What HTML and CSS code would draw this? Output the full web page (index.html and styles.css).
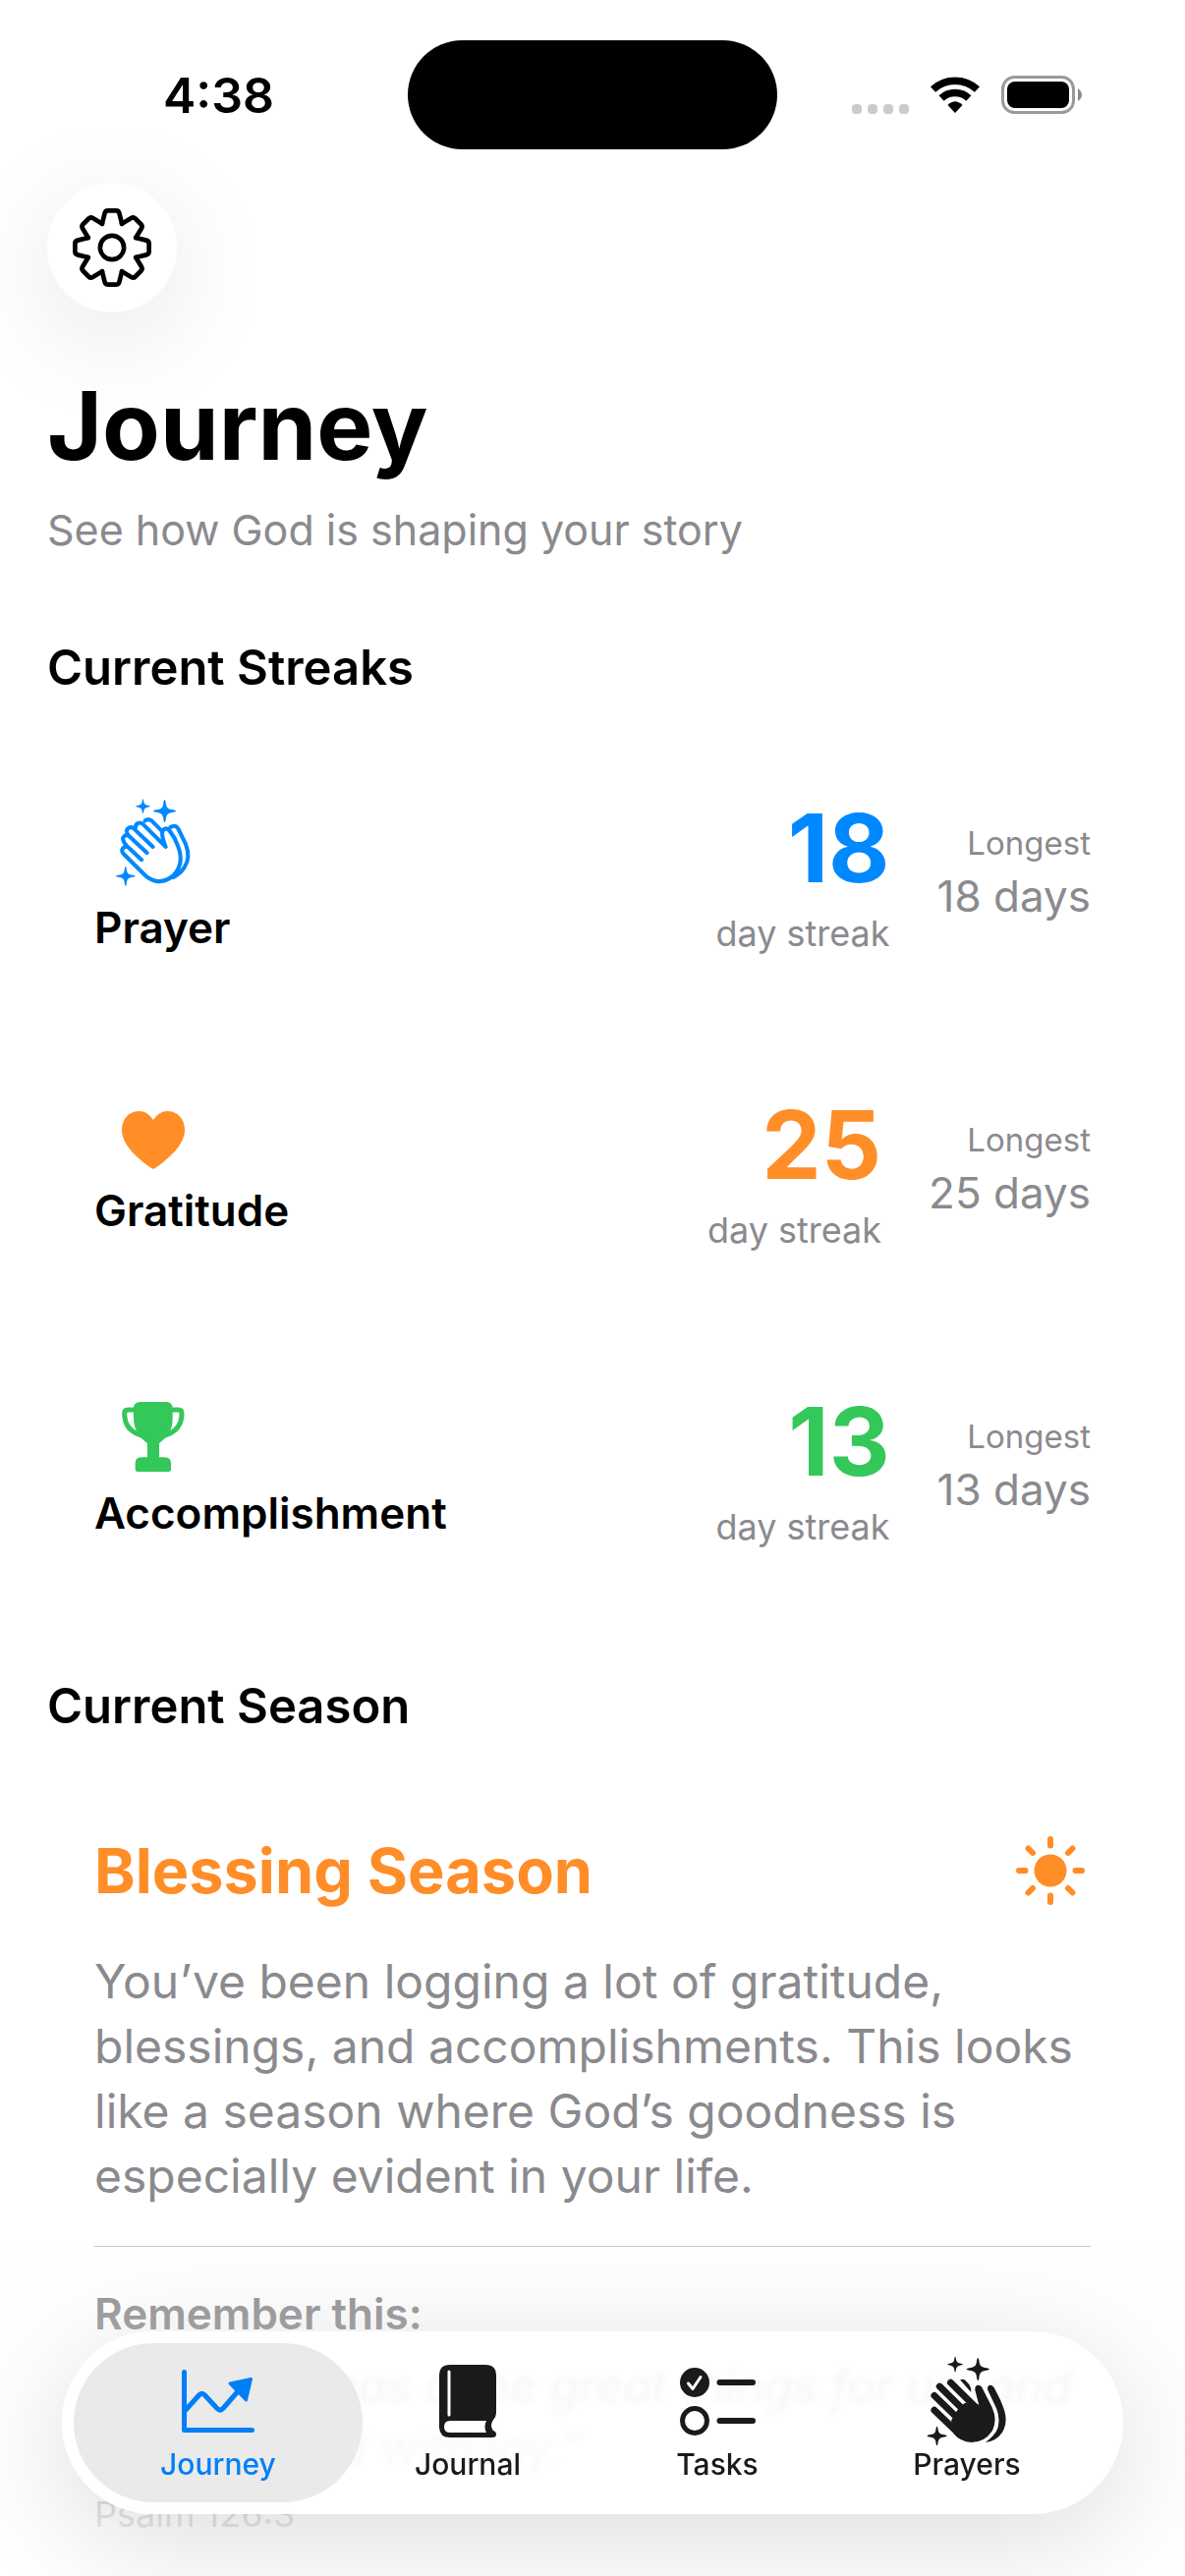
FILE: index.html
```html
<!DOCTYPE html>
<html lang="en">
<head>
    <meta charset="UTF-8">
    <meta name="viewport" content="width=device-width, initial-scale=1.0">
    <title>Journey</title>
    <link rel="stylesheet" href="styles.css">
</head>
<body>
    <!-- shared shapes -->
    <svg class="defs" width="0" height="0" aria-hidden="true">
        <defs>
            <path id="star" d="M0 -1Q.08 -1 .12 -.6Q.18 -.2 .6 -.13Q1 -.08 1 0Q1 .08 .6 .13Q.18 .2 .12 .6Q.08 1 0 1Q-.08 1 -.12 .6Q-.18 .2 -.6 .13Q-1 .08 -1 0Q-1 -.08 -.6 -.13Q-.18 -.2 -.12 -.6Q-.08 -1 0 -1Z"/>
            <path id="tooth" d="M-30 -72L-22 -104Q-20 -112 -12 -112H12Q20 -112 22 -104L30 -72"/>
        </defs>
    </svg>

    <div class="status-bar">
        <span class="time">4:38</span>
        <div class="island"></div>
        <div class="status-icons">
            <svg class="signal" viewBox="0 0 58 10" width="58" height="10">
                <rect width="10" height="10" rx="4"/>
                <rect x="16" width="10" height="10" rx="4"/>
                <rect x="32" width="10" height="10" rx="4"/>
                <rect x="48" width="10" height="10" rx="4"/>
            </svg>
            <svg viewBox="0 0 50 37" width="50" height="37">
                <path d="M2.5 13A33 33 0 0 1 47.5 13M11.1 22A20.5 20.5 0 0 1 38.9 22" fill="none" stroke="#000" stroke-width="7.5"/>
                <path d="M25 37L17.5 29Q25 21.5 32.5 29Z"/>
            </svg>
            <svg viewBox="0 0 82 39" width="82" height="39">
                <rect x="1.5" y="1.5" width="72" height="36" rx="12" fill="none" stroke="#9a9a9a" stroke-width="3"/>
                <rect x="6" y="6" width="63" height="27" rx="8"/>
                <path d="M78 13Q82 16 82 19.500Q82 23 78 26Z" fill="#8a8a8a"/>
            </svg>
        </div>
    </div>

    <main class="page">
        <button class="settings" type="button" aria-label="Settings">
            <svg viewBox="-119 -119 238 238" width="80" height="80">
                <g fill="none" stroke="#000" stroke-width="14" stroke-linecap="round" stroke-linejoin="round">
                    <use href="#tooth"/>
                    <use href="#tooth" transform="rotate(45)"/>
                    <use href="#tooth" transform="rotate(90)"/>
                    <use href="#tooth" transform="rotate(135)"/>
                    <use href="#tooth" transform="rotate(180)"/>
                    <use href="#tooth" transform="rotate(225)"/>
                    <use href="#tooth" transform="rotate(270)"/>
                    <use href="#tooth" transform="rotate(315)"/>
                    <circle r="36"/>
                </g>
            </svg>
        </button>

        <header class="intro">
            <h1>Journey</h1>
            <p class="subtitle">See how God is shaping your story</p>
        </header>

        <section class="section">
            <h2>Current Streaks</h2>
            <div class="streaks">
                <article class="streak prayer">
                    <div class="habit">
                        <svg class="habit-icon" viewBox="112 96 226 262" width="77" height="89">
                            <g fill="currentColor">
                                <use href="#star" transform="translate(194 119) scale(22)"/>
                                <use href="#star" transform="translate(259 133) scale(34)"/>
                                <use href="#star" transform="translate(142 328) scale(29)"/>
                            </g>
                            <g fill="none" stroke="currentColor" stroke-width="12" stroke-linecap="round" stroke-linejoin="round">
                                <path d="M190 279L152 243A12 12 0 0 0 135 260L203 328Q245 360 285 326Q320 290 299 238Q290 212 274 192Q262 178 252 194Q250 210 262 240L194 172A13 13 0 0 0 172 182"/>
                                <path d="M206 258L150 206A12 12 0 0 0 134 218Q136 228 145 236"/>
                                <path d="M224 240L165 184A13 13 0 0 0 145 192Q145 198 150 206"/>
                                <path d="M200 162Q210 154 220 162L248 190"/>
                                <path d="M276 182Q290 172 300 186L322 232Q338 272 318 302Q304 322 285 331"/>
                            </g>
                        </svg>
                        <h3>Prayer</h3>
                    </div>
                    <div class="current">
                        <strong>18</strong>
                        <span>day streak</span>
                    </div>
                    <div class="longest">
                        <span class="label">Longest</span>
                        <span>18 days</span>
                    </div>
                </article>

                <article class="streak gratitude">
                    <div class="habit">
                        <svg class="habit-icon" viewBox="0 0 64 59" width="64" height="59">
                            <path d="M32 9Q26 0 18 0C7 0 0 8 0 19C0 33 13 46 30 58Q32 59.500 34 58C51 46 64 33 64 19C64 8 57 0 46 0Q38 0 32 9Z" fill="currentColor"/>
                        </svg>
                        <h3>Gratitude</h3>
                    </div>
                    <div class="current">
                        <strong>25</strong>
                        <span>day streak</span>
                    </div>
                    <div class="longest">
                        <span class="label">Longest</span>
                        <span>25 days</span>
                    </div>
                </article>

                <article class="streak accomplishment">
                    <div class="habit">
                        <svg class="habit-icon" viewBox="132 1005 190 213" width="63" height="71">
                            <path d="M167 1025Q167 1005 187 1005H267Q286 1005 286 1025V1050Q286 1080 278 1094L284 1104Q270 1108 262 1116L245 1132V1174H262Q281 1174 281 1192V1210Q281 1218 273 1218H180Q172 1218 172 1210V1192Q172 1174 190 1174H209V1132L191 1116Q183 1108 170 1104L177 1094Q167 1080 167 1050Z" fill="currentColor"/>
                            <path d="M170 1029H150Q139 1029 139 1040Q139 1092 192 1107M284 1029H303Q314 1029 314 1040Q314 1092 261 1107" fill="none" stroke="currentColor" stroke-width="15"/>
                        </svg>
                        <h3>Accomplishment</h3>
                    </div>
                    <div class="current">
                        <strong>13</strong>
                        <span>day streak</span>
                    </div>
                    <div class="longest">
                        <span class="label">Longest</span>
                        <span>13 days</span>
                    </div>
                </article>
            </div>
        </section>

        <section class="section">
            <h2>Current Season</h2>
            <article class="season">
                <div class="season-head">
                    <h3>Blessing Season</h3>
                    <svg viewBox="0 0 70 70" width="70" height="70">
                        <circle cx="35" cy="35" r="16.500" fill="currentColor"/>
                        <path d="M35 3V9.500M35 60.500V67M3 35H9.500M60.500 35H67M12.500 12.500L17 17M53 53L57.500 57.500M12.500 57.500L17 53M53 17L57.500 12.500" stroke="currentColor" stroke-width="6" stroke-linecap="round"/>
                    </svg>
                </div>
                <p class="season-text">You’ve been logging a lot of gratitude, blessings, and accomplishments. This looks like a season where God’s goodness is especially evident in your life.</p>
                <hr>
                <div class="verse">
                    <h4>Remember this:</h4>
                    <blockquote>“The Lord has done great things for us, and we are filled with joy.”</blockquote>
                    <cite>Psalm 126:3</cite>
                </div>
            </article>
        </section>
    </main>

    <div class="bottom-fade"></div>

    <nav class="tab-bar">
        <a href="#journey" class="tab active" aria-current="page">
            <span class="tab-icon">
                <svg viewBox="0 0 74 64" width="74" height="64">
                    <path d="M2.500 2.500V61.500H71.500M4 41L17.500 26Q20.500 22.500 23.500 26L36 39.500Q39 42.500 42 39.500L58 21" fill="none" stroke="currentColor" stroke-width="5" stroke-linecap="round" stroke-linejoin="round"/>
                    <path d="M49 14L70.500 9.500L65.500 31Z" fill="currentColor" stroke="currentColor" stroke-width="3" stroke-linejoin="round"/>
                </svg>
            </span>
            Journey
        </a>
        <a href="#journal" class="tab">
            <span class="tab-icon">
                <svg viewBox="0 0 58 74" width="58" height="74">
                    <path d="M11 0H47Q58 0 58 11V49Q58 53 55 56Q51 62 55 67Q58 68 58 71Q58 74 54 74H11Q0 74 0 63V11Q0 0 11 0Z" fill="currentColor"/>
                    <path d="M11 57H48Q45 63 48 69H11Q5 69 5 63Q5 57 11 57Z" fill="#fff"/>
                    <path d="M10 7V51" stroke="#fff" stroke-width="3" stroke-linecap="round"/>
                </svg>
            </span>
            Journal
        </a>
        <a href="#tasks" class="tab">
            <span class="tab-icon">
                <svg viewBox="0 0 77 69" width="77" height="69">
                    <circle cx="15" cy="15" r="15" fill="currentColor"/>
                    <path d="M8.500 16L13 21.500L21 9.500" fill="none" stroke="#fff" stroke-width="3" stroke-linecap="round" stroke-linejoin="round"/>
                    <circle cx="15" cy="54" r="12.500" fill="none" stroke="currentColor" stroke-width="5"/>
                    <path d="M40.500 15H74M40.500 54H74" stroke="currentColor" stroke-width="6" stroke-linecap="round"/>
                </svg>
            </span>
            Tasks
        </a>
        <a href="#prayers" class="tab">
            <span class="tab-icon">
                <svg viewBox="55 18 252 278" width="84" height="92">
                    <g fill="currentColor">
                        <use href="#star" transform="translate(145 44) scale(24)"/>
                        <use href="#star" transform="translate(215 59) scale(35)"/>
                        <use href="#star" transform="translate(89 264) scale(30)"/>
                        <path d="M133 216L151 186L174 163L206 162L218 168L206 122Q206 108 216 108Q224 108 229 118L258 175Q277 215 258 250Q235 284 195 284Q160 282 140 257Z"/>
                        <path d="M160 91Q170 87 176 93L188 106Q195 116 194 130Z"/>
                        <path d="M245 122Q243 108 254 108Q262 109 267 120Q288 158 297 188Q307 225 290 253Q272 280 238 284Q268 262 276 240Q284 210 272 180Z"/>
                    </g>
                    <path d="M81 185L150 251M81 140L160 217M97 112L180 193M131 100L208 176" stroke="currentColor" stroke-width="21" stroke-linecap="round"/>
                </svg>
            </span>
            Prayers
        </a>
    </nav>
</body>
</html>
```

FILE: styles.css
```css
* {
    box-sizing: border-box;
    margin: 0;
    padding: 0;
}
body {
    font-family: Inter, "Liberation Sans", sans-serif;
    background-color: #fff;
    color: #000;
    font-size: 44px;
    line-height: 60px;
}
.defs {
    position: absolute;
}
svg {
    display: block;
    flex-shrink: 0;
}

/* status bar */
.status-bar {
    display: grid;
    grid-template-columns: 1fr 376px 1fr;
    align-items: center;
    padding: 41px 30px 0;
}
.time {
    text-align: center;
    font-size: 50px;
    font-weight: 600;
}
.island {
    height: 111px;
    border-radius: 56px;
    background-color: #000;
}
.status-icons {
    display: flex;
    justify-content: center;
    align-items: center;
    gap: 22px;
}
.signal {
    align-self: flex-end;
    fill: #cbcbcb;
}

/* page */
.page {
    padding: 34px 48px 0;
}
.settings {
    display: flex;
    align-items: center;
    justify-content: center;
    width: 132px;
    height: 132px;
    border: none;
    border-radius: 50%;
    background-color: #fff;
    box-shadow: 0 24px 110px rgba(0, 0, 0, 0.1);
    cursor: pointer;
}
.intro {
    margin-top: 55px;
}
h1 {
    font-size: 96px;
    line-height: 120px;
}
.subtitle {
    margin-top: 16px;
    font-size: 43px;
    color: #8a8a8e;
}
.section {
    margin-top: 78px;
}
h2 {
    font-size: 49px;
    line-height: 66px;
    font-weight: 600;
}

/* streaks */
.streaks {
    display: flex;
    flex-direction: column;
    gap: 38px;
    margin-top: 44px;
}
.streak {
    display: flex;
    align-items: center;
    gap: 48px;
    padding: 48px;
}
.habit {
    display: flex;
    flex-direction: column;
    gap: 12px;
    flex: 1;
}
.habit h3 {
    font-size: 44px;
    font-weight: 600;
    color: #000;
}
.habit-icon {
    width: 120px;
    margin-top: 8px;
}
.prayer {
    color: #0088ff;
}
.gratitude {
    color: #ff8d28;
}
.accomplishment {
    color: #34c759;
}
.current,
.longest {
    display: flex;
    flex-direction: column;
    align-items: flex-end;
}
.current {
    gap: 6px;
    font-size: 36px;
    line-height: 48px;
}
.current strong {
    font-size: 96px;
    line-height: 114px;
}
.current span,
.longest span {
    color: #8a8a8e;
}
.longest {
    gap: 4px;
    font-size: 44px;
}
.longest .label {
    font-size: 33px;
    line-height: 40px;
}

/* season */
.season {
    margin-top: 44px;
    padding: 48px 48px 0;
}
.season-head {
    display: flex;
    align-items: center;
    justify-content: space-between;
    color: #ff8d28;
}
.season-head h3 {
    font-size: 63px;
    line-height: 84px;
}
.season-head svg {
    margin-right: 6px;
}
.season-text {
    margin-top: 38px;
    font-size: 48px;
    line-height: 66px;
    color: #8a8a8e;
}
hr {
    height: 1px;
    margin: 38px 0;
    border: none;
    background-color: #c6c6c8;
}
.verse {
    display: flex;
    flex-direction: column;
    gap: 12px;
    color: #8a8a8e;
}
.verse h4 {
    font-size: 44px;
    font-weight: 600;
}
.verse blockquote {
    font-size: 48px;
    line-height: 63px;
    font-style: italic;
}
.verse cite {
    font-size: 36px;
    line-height: 48px;
    font-style: normal;
}

/* content fades out behind the tab bar */
.bottom-fade {
    position: fixed;
    left: 0;
    right: 0;
    bottom: 0;
    height: 340px;
    background: linear-gradient(rgba(255, 255, 255, 0), rgba(255, 255, 255, 0.8) 85%);
}

/* tab bar */
.tab-bar {
    position: fixed;
    left: 63px;
    right: 63px;
    bottom: 63px;
    display: flex;
    padding: 12px 32px;
    border-radius: 93px;
    background-color: rgba(255, 255, 255, 0.85);
    backdrop-filter: blur(3px);
    box-shadow: 0 24px 120px rgba(0, 0, 0, 0.14);
}
.tab {
    flex: 1;
    margin: 0 -20px;
    padding: 13px 0 21px;
    border-radius: 81px;
    color: #1a1a1a;
    font-size: 30px;
    line-height: 36px;
    font-weight: 500;
    text-align: center;
    text-decoration: none;
}
.tab.active {
    background-color: rgba(232, 232, 232, 0.9);
    color: #007ff7;
}
.tab-icon {
    display: flex;
    align-items: center;
    justify-content: center;
    height: 92px;
}
```
